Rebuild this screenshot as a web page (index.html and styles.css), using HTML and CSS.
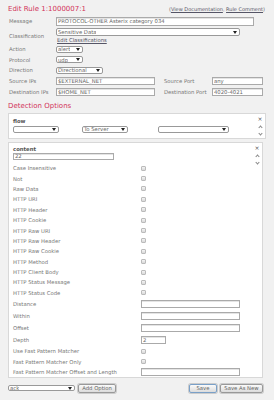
FILE: index.html
```html
<!DOCTYPE html>
<html lang="en">
<head>
    <meta charset="UTF-8">
    <title>Edit Rule</title>
    <link rel="stylesheet" href="styles.css">
</head>
<body>
    <div class="page">
        <div class="head">
            <h1>Edit Rule 1:1000007:1</h1>
            <span class="links">(<a href="#">View Documentation</a>, <a href="#">Rule Comment</a>)</span>
        </div>

        <div class="row r-msg">
            <label>Message</label>
            <input type="text" class="field w-msg" value="PROTOCOL-OTHER Asterix category 034">
        </div>

        <div class="row r-class">
            <label>Classification</label>
            <div class="stack">
                <div class="select w-class"><span>Sensitive Data</span><i class="arrow"></i></div>
                <a href="#" class="edit-link">Edit Classifications</a>
            </div>
        </div>

        <div class="row r-small">
            <label>Action</label>
            <div class="select w-act"><span>alert</span><i class="arrow"></i></div>
        </div>
        <div class="row r-small">
            <label>Protocol</label>
            <div class="select w-act"><span>udp</span><i class="arrow"></i></div>
        </div>
        <div class="row r-small">
            <label>Direction</label>
            <div class="select w-dir"><span>Directional</span><i class="arrow"></i></div>
        </div>

        <div class="row r-ip">
            <label>Source IPs</label>
            <input type="text" class="field w-ip" value="$EXTERNAL_NET">
            <label class="port-label">Source Port</label>
            <input type="text" class="field w-port" value="any">
        </div>
        <div class="row r-ip">
            <label>Destination IPs</label>
            <input type="text" class="field w-ip" value="$HOME_NET">
            <label class="port-label">Destination Port</label>
            <input type="text" class="field w-port" value="4020-4021">
        </div>

        <h2>Detection Options</h2>

        <div class="opt opt-flow">
            <div class="opt-body">
                <div class="opt-title">flow</div>
                <div class="flow-selects">
                    <div class="select w-flow1"><span></span><i class="arrow"></i></div>
                    <div class="select w-flow2"><span>To Server</span><i class="arrow"></i></div>
                    <div class="select w-flow3"><span></span><i class="arrow"></i></div>
                </div>
            </div>
            <div class="ctrl">
                <span class="x">&#215;</span>
                <span class="up"></span>
                <span class="down"></span>
            </div>
        </div>

        <div class="opt opt-content">
            <div class="opt-body">
                <div class="opt-title">content</div>
                <input type="text" class="field w-content" value="22">
                <div class="list">
                    <div class="item"><span>Case Insensitive</span><input type="checkbox"></div>
                    <div class="item"><span>Not</span><input type="checkbox"></div>
                    <div class="item"><span>Raw Data</span><input type="checkbox"></div>
                    <div class="item"><span>HTTP URI</span><input type="checkbox"></div>
                    <div class="item"><span>HTTP Header</span><input type="checkbox"></div>
                    <div class="item"><span>HTTP Cookie</span><input type="checkbox"></div>
                    <div class="item"><span>HTTP Raw URI</span><input type="checkbox"></div>
                    <div class="item"><span>HTTP Raw Header</span><input type="checkbox"></div>
                    <div class="item"><span>HTTP Raw Cookie</span><input type="checkbox"></div>
                    <div class="item"><span>HTTP Method</span><input type="checkbox"></div>
                    <div class="item"><span>HTTP Client Body</span><input type="checkbox"></div>
                    <div class="item"><span>HTTP Status Message</span><input type="checkbox"></div>
                    <div class="item"><span>HTTP Status Code</span><input type="checkbox"></div>
                    <div class="item tall"><span>Distance</span><input type="text" class="field w-num"></div>
                    <div class="item tall"><span>Within</span><input type="text" class="field w-num"></div>
                    <div class="item tall"><span>Offset</span><input type="text" class="field w-num"></div>
                    <div class="item tall"><span>Depth</span><input type="text" class="field w-depth" value="2"></div>
                    <div class="item"><span>Use Fast Pattern Matcher</span><input type="checkbox"></div>
                    <div class="item"><span>Fast Pattern Matcher Only</span><input type="checkbox"></div>
                    <div class="item"><span>Fast Pattern Matcher Offset and Length</span><input type="text" class="field w-num"></div>
                </div>
            </div>
            <div class="ctrl">
                <span class="x">&#215;</span>
                <span class="up"></span>
                <span class="down"></span>
            </div>
        </div>

        <div class="bottom">
            <div class="select w-add"><span>ack</span><i class="arrow"></i></div>
            <button type="button" class="btn btn-add">Add Option</button>
            <div class="spacer"></div>
            <button type="button" class="btn btn-save">Save</button>
            <button type="button" class="btn btn-new">Save As New</button>
        </div>
    </div>
</body>
</html>
```

FILE: styles.css
```css
* {
    margin: 0;
    padding: 0;
    box-sizing: border-box;
}

body {
    background: #f1f1f1;
    color: #777;
    font-family: 'DejaVu Sans', Verdana, sans-serif;
    font-size: 5.3px;
}

.page {
    width: 274px;
    padding: 4px 8px 0 8px;
}

/* Header */
.head {
    display: flex;
    align-items: center;
    justify-content: space-between;
    height: 10px;
    margin-bottom: 2px;
}

.head h1 {
    font-size: 7px;
    font-weight: normal;
    color: #d2345a;
}

.links {
    font-size: 5px;
    color: #666;
    margin-right: 1px;
}

.links a, .edit-link {
    color: #556;
    text-decoration: underline;
}

/* Form rows */
.row {
    display: flex;
    align-items: center;
}

.row label {
    width: 48px;
    padding-left: 1px;
    flex-shrink: 0;
}

.r-msg {
    height: 10px;
}

.r-class {
    height: 17px;
    margin-top: 1px;
}

.stack {
    display: flex;
    flex-direction: column;
    gap: 1px;
}

.edit-link {
    font-size: 5.3px;
    padding-left: 1px;
}

.r-small {
    height: 10.5px;
}

.r-small:first-of-type {
    margin-top: 1px;
}

.r-ip {
    height: 11px;
}

.port-label {
    margin-left: 8px;
}

.row .port-label {
    width: 49px;
}

/* Fields */
.field {
    height: 8px;
    border: 1px solid #aaa;
    background: #fff;
    font-family: inherit;
    font-size: 5.3px;
    color: #666;
    padding: 0 1px;
    outline: none;
    box-shadow: inset 0 1px 0 #e4e4e4;
}

.w-msg { width: 198px; height: 9px; }
.w-ip { width: 99px; }
.w-port { width: 51px; }
.w-content { width: 101px; height: 7.5px; margin-top: 1px; }
.w-num { width: 99px; }
.w-depth { width: 25px; }

.select {
    display: flex;
    align-items: center;
    justify-content: space-between;
    height: 7px;
    border: 1px solid #999;
    border-radius: 2px;
    background: #fff;
    color: #666;
    padding: 0 2px 0 1px;
}

.select span {
    white-space: nowrap;
    overflow: hidden;
}

.arrow {
    width: 0;
    height: 0;
    border-left: 2px solid transparent;
    border-right: 2px solid transparent;
    border-top: 3px solid #222;
    margin-left: 2px;
    flex-shrink: 0;
}

.w-class { width: 184px; height: 8px; }
.w-act { width: 27px; }
.w-dir { width: 47px; }
.w-flow1 { width: 46px; }
.w-flow2 { width: 46px; margin-left: 23px; }
.w-flow3 { width: 71px; margin-left: 30px; }
.w-add { width: 67px; height: 6px; }

h2 {
    font-size: 7px;
    font-weight: normal;
    color: #d2345a;
    height: 10px;
    line-height: 10px;
    margin-top: 3px;
    margin-bottom: 2px;
}

/* Detection option boxes */
.opt {
    display: flex;
    background: #fff;
    border: 1px solid #d8d8d8;
}

.opt-body {
    flex: 1;
    padding: 4px 0 0 4px;
}

.opt-title {
    font-weight: bold;
    color: #555;
    line-height: 6px;
    height: 6px;
}

.opt-flow {
    width: 258px;
    height: 26px;
}

.flow-selects {
    display: flex;
    margin-top: 2px;
}

.opt-content {
    width: 255px;
    height: 236px;
    margin-top: 3px;
}

.opt-content .opt-body {
    padding-top: 3px;
}

.ctrl {
    display: flex;
    flex-direction: column;
    align-items: center;
    width: 10px;
    padding-top: 2px;
}

.ctrl .x {
    font-size: 6px;
    line-height: 6px;
    color: #555;
}

.ctrl .up, .ctrl .down {
    width: 3px;
    height: 3px;
    border-left: 1px solid #888;
    border-top: 1px solid #888;
    margin-top: 4px;
}

.ctrl .up {
    transform: rotate(45deg);
}

.ctrl .down {
    transform: rotate(225deg);
    margin-top: 3px;
}

.list {
    margin-top: 3px;
}

.item {
    display: flex;
    align-items: center;
    height: 10.4px;
}

.item.tall {
    height: 12px;
}

.item span {
    width: 128px;
    flex-shrink: 0;
}

.item input[type="checkbox"] {
    appearance: none;
    width: 5px;
    height: 5px;
    border: 1px solid #bbb;
    border-radius: 1px;
    background: linear-gradient(#f4f4f4, #d8d8d8);
}

/* Bottom bar */
.bottom {
    display: flex;
    align-items: center;
    height: 11px;
    margin-top: 5px;
}

.spacer {
    flex: 1;
}

.btn {
    height: 9px;
    border: 1px solid #999;
    border-radius: 2px;
    background: linear-gradient(#fafafa, #dcdcdc);
    font-family: inherit;
    font-size: 5.3px;
    color: #666;
    padding: 0 3px;
    box-shadow: 0 0 0 1px #ccc;
}

.btn-add { width: 38px; margin-left: 3px; }
.btn-save { width: 28px; border-color: #7aa0c8; }
.btn-new { width: 43px; margin-left: 3px; margin-right: 3px; }
```
